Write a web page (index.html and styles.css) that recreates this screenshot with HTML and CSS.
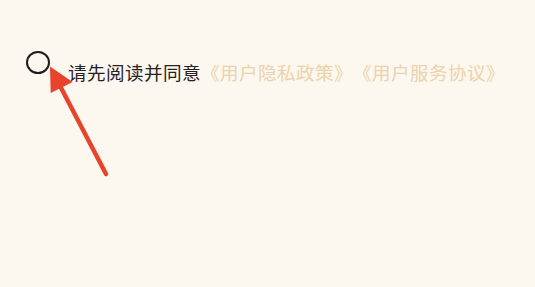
FILE: index.html
```html
<!DOCTYPE html>
<html lang="zh">
<head>
<meta charset="utf-8">
<link rel="stylesheet" href="styles.css">
</head>
<body>
<div class="page">
  <div class="agree">
    <span class="radio"></span>
    <p class="text">请先阅读并同意<span class="link">《用户隐私政策》</span><span class="link">《用户服务协议》</span></p>
  </div>
  <svg class="arrow" width="535" height="287" viewBox="0 0 535 287">
    <line x1="106" y1="174" x2="58" y2="82" stroke="#e8432d" stroke-width="4.5" stroke-linecap="round"/>
    <polygon points="50,66.5 50.7,93 72.7,82" fill="#e8432d"/>
  </svg>
</div>
</body>
</html>
```
FILE: styles.css
```css
html, body {
  margin: 0;
  padding: 0;
  background: #fcf7ef;
}
.page {
  position: relative;
  width: 535px;
  height: 287px;
  overflow: hidden;
  background: #fcf7ef;
}
.agree {
  display: flex;
  align-items: flex-start;
  padding: 51px 0 0 26px;
}
.radio {
  box-sizing: border-box;
  width: 24px;
  height: 23px;
  border: 2.6px solid #1f1b18;
  border-radius: 50%;
  flex: none;
}
.text {
  margin: 8px 0 0 18px;
  font-family: "Noto Sans CJK SC", "Noto Sans", sans-serif;
  font-size: 18.6px;
  line-height: 26px;
  letter-spacing: 0.4px;
  color: #27221f;
  white-space: nowrap;
  text-spacing-trim: space-all;
}
.link {
  color: #ebd3ab;
}
.arrow {
  position: absolute;
  left: 0;
  top: 0;
}
```
